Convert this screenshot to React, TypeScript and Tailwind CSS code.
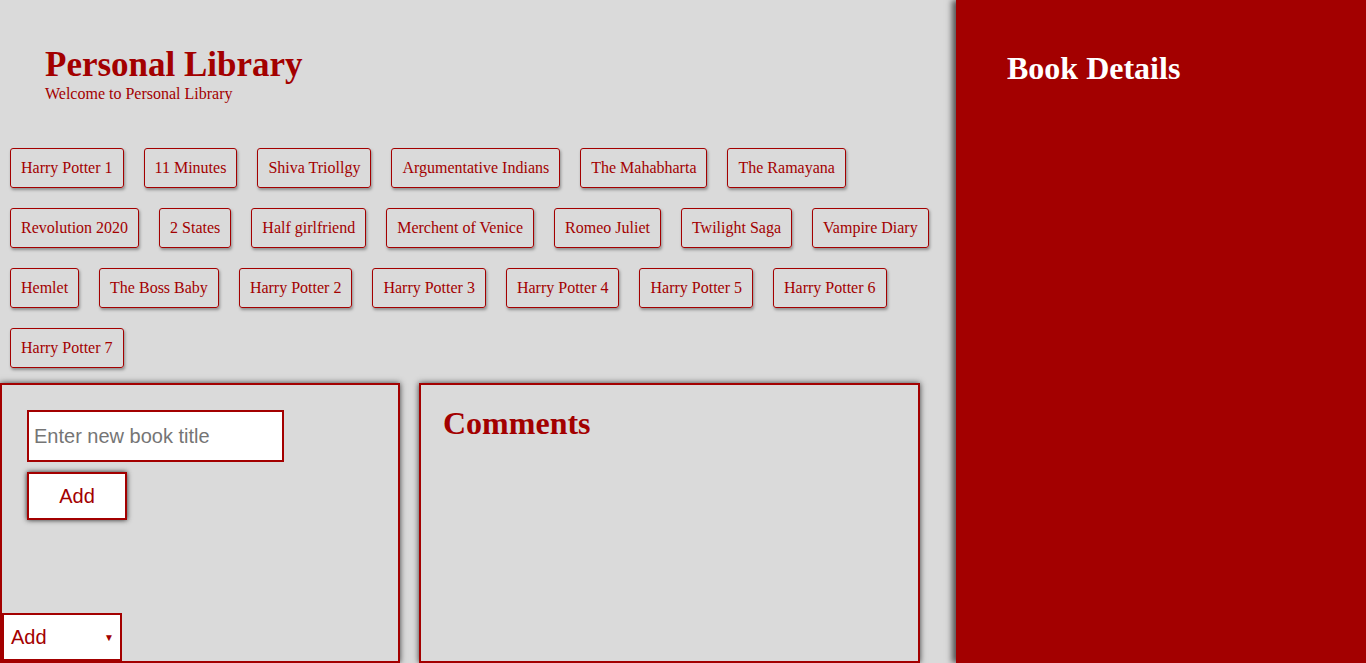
import React from "react";

const books = [
  "Harry Potter 1",
  "11 Minutes",
  "Shiva Triollgy",
  "Argumentative Indians",
  "The Mahabharta",
  "The Ramayana",
  "Revolution 2020",
  "2 States",
  "Half girlfriend",
  "Merchent of Venice",
  "Romeo Juliet",
  "Twilight Saga",
  "Vampire Diary",
  "Hemlet",
  "The Boss Baby",
  "Harry Potter 2",
  "Harry Potter 3",
  "Harry Potter 4",
  "Harry Potter 5",
  "Harry Potter 6",
  "Harry Potter 7",
];

export default function App() {
  return (
    <div className="flex h-[663px] w-full overflow-hidden bg-[#dadada] font-['Liberation_Serif',serif] text-[#a30000]">
      <div className="flex w-[956px] shrink-0 flex-col">
        <header className="pl-[45px] pt-[45px]">
          <h1 className="text-[35px] font-bold leading-[40px]">Personal Library</h1>
          <p className="text-[16px] leading-[18px]">Welcome to Personal Library</p>
        </header>

        <div className="mt-[45px] flex flex-wrap gap-x-5 gap-y-5 pl-[10px] pr-[20px]">
          {books.map((b) => (
            <button
              key={b}
              className="h-10 rounded-[3px] border border-[#a30000] px-[10px] text-[16px] text-[#a30000] shadow-[1px_2px_3px_rgba(0,0,0,0.35)]"
            >
              {b}
            </button>
          ))}
        </div>

        <div className="mt-[15px] flex gap-[19px]">
          <div className="flex h-[280px] w-[400px] flex-col border-2 border-[#a30000] shadow-[0_0_6px_#3a3a3a]">
            <div className="flex flex-col items-start gap-[10px] pl-[25px] pt-[25px]">
              <input
                placeholder="Enter new book title"
                className="h-[52px] w-[257px] border-2 border-[#a30000] bg-white px-[5px] font-['Liberation_Sans',sans-serif] text-[20px] text-[#a30000] placeholder:text-[#757575]"
              />
              <button className="h-[48px] w-[100px] border-2 border-[#a30000] bg-white font-['Liberation_Sans',sans-serif] text-[20px] text-[#a30000] shadow-[0_0_5px_#222]">
                Add
              </button>
            </div>
            <div className="mt-auto flex h-[48px] w-[120px] items-center justify-between border-2 border-[#a30000] bg-white pl-[7px] pr-[6px] font-['Liberation_Sans',sans-serif] text-[20px]">
              <span>Add</span>
              <span className="text-[10px]">▼</span>
            </div>
          </div>

          <div className="h-[280px] w-[501px] border-2 border-[#a30000] px-[22px] pt-[18px] shadow-[0_0_6px_#3a3a3a]">
            <h2 className="text-[32px] font-bold leading-[40px]">Comments</h2>
          </div>
        </div>
      </div>

      <aside className="flex-1 bg-[#a30000] pl-[51px] pt-[48px] shadow-[-4px_0_6px_#555]">
        <h2 className="text-[32px] font-bold leading-[40px] text-white">Book Details</h2>
      </aside>
    </div>
  );
}
